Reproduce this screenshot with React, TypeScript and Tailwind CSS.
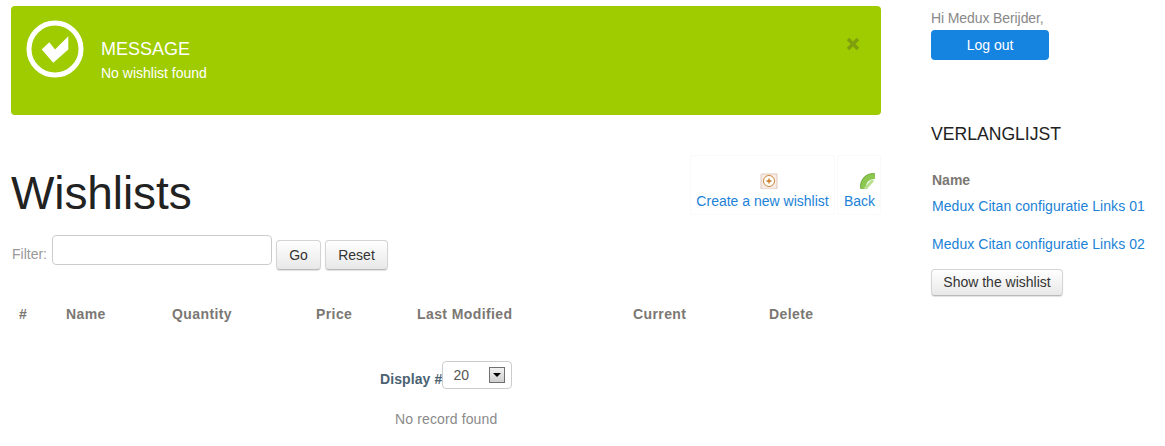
import React from 'react';

const sans = "font-['Liberation_Sans',Arial,sans-serif]";
const greyBtn =
  'rounded-[4px] border border-[#d4d4d4] border-b-[#b9b9b9] bg-gradient-to-b from-white to-[#e8e8e8] text-[14px] text-[#333] shadow-[0_1px_1px_rgba(0,0,0,0.12)]';

const columns = [
  { label: '#', width: 'w-[47px]' },
  { label: 'Name', width: 'w-[106px]' },
  { label: 'Quantity', width: 'w-[144px]' },
  { label: 'Price', width: 'w-[101px]' },
  { label: 'Last Modified', width: 'w-[216px]' },
  { label: 'Current', width: 'w-[136px]' },
  { label: 'Delete', width: 'w-[60px]' },
];

const CheckCircle = () => (
  <svg width="58" height="58" viewBox="0 0 58 58" className="shrink-0">
    <circle cx="29" cy="29" r="26" fill="none" stroke="#fff" strokeWidth="5" />
    <path d="M15.7 29.5 L23.3 22.2 L29 29.5 L42.3 16.2 L42.3 29.5 L27.3 42.8 Z" fill="#fff" />
  </svg>
);

const AddIcon = () => (
  <svg width="18" height="16" viewBox="0 0 18 16">
    <path d="M1 16 V2 Q1 1 2 1 H17 V16 Z" fill="#f8ece4" stroke="#e0c8bc" />
    <circle cx="9" cy="8" r="5.5" fill="#fff" stroke="#c9863a" />
    <path d="M9 5.5 V10.5 M6.5 8 H11.5" stroke="#c9761a" strokeWidth="1.3" />
  </svg>
);

const BackIcon = () => (
  <svg width="15" height="16" viewBox="0 0 15 16">
    <circle cx="13" cy="13" r="12.5" fill="#8cc850" stroke="#5f9e2a" strokeWidth="0.8" />
    <circle cx="14" cy="14" r="8" fill="#fff" />
    <path d="M5 16 L13 7" stroke="#b8e090" strokeWidth="3" />
  </svg>
);

export default function App() {
  return (
    <div className={`${sans} flex h-[446px] w-[1165px] overflow-hidden bg-white pl-[11px] pt-[6px] text-[14px] text-[#888]`}>
      <main className="w-[870px] shrink-0">
        {/* Message */}
        <div className="relative flex h-[109px] items-start rounded-[4px] bg-[#9ecc00] pl-[15px] pt-[14px] text-white">
          <CheckCircle />
          <div className="ml-[17px] mt-[15px]">
            <div className="text-[18px] leading-[28px]">MESSAGE</div>
            <div className="text-[14px] leading-[20px]">No wishlist found</div>
          </div>
          <svg width="14" height="14" viewBox="0 0 14 14" className="absolute right-[21px] top-[31px]">
            <path d="M2 2 L12 12 M12 2 L2 12" stroke="#7f9f0c" strokeWidth="3.4" />
          </svg>
        </div>

        {/* Title + toolbar */}
        <div className="mt-[40px] flex h-[60px] items-end justify-between">
          <h1 className="mb-[-3px] text-[46px] leading-[50px] tracking-[-0.1px] text-[#222]">Wishlists</h1>
          <div className="flex h-[60px] w-[191px] gap-[2px] overflow-hidden">
            <a className="flex h-[60px] w-[145px] shrink-0 flex-col items-center rounded-[2px] border border-[#fafafa] pt-[17px] text-[#1b82d6]">
              <span className="ml-[12px] flex"><AddIcon /></span>
              <span className="mt-[2px] leading-[20px]">Create a new wishlist</span>
            </a>
            <a className="flex h-[60px] w-[44px] shrink-0 flex-col items-start rounded-[2px] border border-[#fafafa] pl-[6px] pt-[17px] text-[#1b82d6]">
              <span className="ml-[16px] flex"><BackIcon /></span>
              <span className="mt-[2px] leading-[20px]">Back</span>
            </a>
          </div>
        </div>

        {/* Filter */}
        <div className="mt-[20px] flex items-start">
          <label className="ml-[1px] mt-[9px] leading-[20px] text-[#999]">Filter:</label>
          <input className="ml-[5px] h-[30px] w-[220px] rounded-[4px] border border-[#ccc] bg-white" />
          <button className={`${greyBtn} ml-[4px] mt-[5px] h-[30px] w-[45px]`}>Go</button>
          <button className={`${greyBtn} ml-[4px] mt-[5px] h-[30px] w-[63px]`}>Reset</button>
        </div>

        {/* Table head */}
        <div className="mt-[34px] flex pl-[8px] text-[14px] font-bold leading-[20px] tracking-[0.4px] text-[#7b7773]">
          {columns.map((col) => (
            <div key={col.label} className={col.width}>{col.label}</div>
          ))}
        </div>

        {/* Display */}
        <div className="mt-[37px] flex items-start pl-[369px]">
          <span className="mt-[8px] text-[14px] font-bold leading-[20px] tracking-[0.1px] text-[#4b6272]">Display #</span>
          <div className="flex h-[28px] w-[70px] items-center justify-between rounded-[4px] border border-[#ccc] pl-[10px] pr-[6px] text-[14px] text-[#555]">
            <span>20</span>
            <span className="flex h-[16px] w-[16px] items-center justify-center border border-[#707070] bg-gradient-to-b from-[#f2f2f2] to-[#cfcfcf]">
              <span className="h-0 w-0 border-x-[4px] border-t-[4px] border-x-transparent border-t-black" />
            </span>
          </div>
        </div>

        <div className="mt-[20px] pl-[384px] leading-[20px] tracking-[0.13px] text-[#8a8a8a]">No record found</div>
      </main>

      {/* Sidebar */}
      <aside className="ml-[50px] flex-1">
        <div className="mt-[3px] leading-[18px] tracking-[-0.1px] text-[#888]">Hi Medux Berijder,</div>
        <button className="mt-[3px] block h-[30px] w-[118px] rounded-[4px] bg-[#1583e0] text-[14px] text-white">Log out</button>
        <h3 className="mt-[62px] text-[17.6px] leading-[24px] text-[#222]">VERLANGLIJST</h3>
        <div className="ml-[1px] mt-[24px] font-bold leading-[20px] text-[#7b7773]">Name</div>
        <a className="ml-[1px] mt-[6px] block leading-[20px] tracking-[0.06px] text-[#1b82d6]">Medux Citan configuratie Links 01</a>
        <a className="ml-[1px] mt-[18px] block leading-[20px] tracking-[0.06px] text-[#1b82d6]">Medux Citan configuratie Links 02</a>
        <button className={`${greyBtn} mt-[15px] h-[27px] w-[132px]`}>Show the wishlist</button>
      </aside>
    </div>
  );
}
